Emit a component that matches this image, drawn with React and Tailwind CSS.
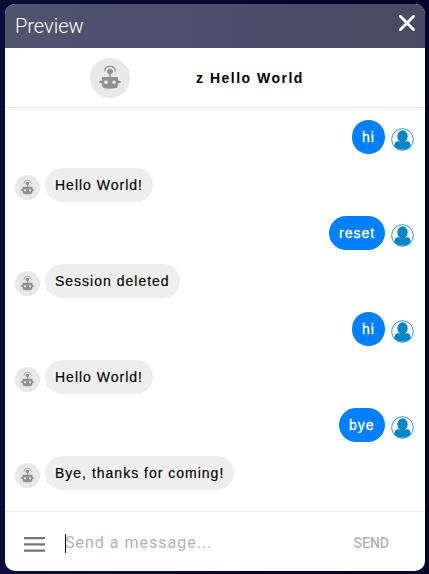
import React from "react";

const messages = [
  { from: "user", text: "hi", width: "w-[33px]" },
  { from: "bot", text: "Hello World!", width: "w-[108px]" },
  { from: "user", text: "reset", width: "w-[56px]" },
  { from: "bot", text: "Session deleted", width: "w-[135px]" },
  { from: "user", text: "hi", width: "w-[33px]" },
  { from: "bot", text: "Hello World!", width: "w-[108px]" },
  { from: "user", text: "bye", width: "w-[46px]" },
  { from: "bot", text: "Bye, thanks for coming!", width: "w-[189px]" },
];

function BotAvatar({ className }) {
  return (
    <svg viewBox="0 0 40 40" className={`shrink-0 ${className}`}>
      <circle cx="20" cy="20" r="20" fill="#e8e8e8" />
      <g fill="#919191">
        <circle cx="20" cy="13.6" r="2.8" />
        <rect x="19.3" y="14" width="1.5" height="6" />
        <path d="M13.2 18.9h13.6q1.3 0 1.3 1.3v2.5h1.6q1.2.3 1.2 1.3t-1.2 1.3h-1.6l-.4 3q-.3 1.7-2.1 1.9-5.6.9-11.2 0-1.8-.2-2.1-1.9l-.4-3h-1.6q-1.2-.3-1.2-1.3t1.2-1.3h1.6v-2.5q0-1.3 1.3-1.3Z" />
      </g>
      <path d="M14.6 13.2c.5-6.5 10.3-6.5 10.8 0" fill="none" stroke="#919191" strokeWidth="1.2" />
      <circle cx="16" cy="24.3" r="1.7" fill="#f4f4f4" />
      <circle cx="24" cy="24.3" r="1.7" fill="#f4f4f4" />
    </svg>
  );
}

function UserAvatar() {
  return (
    <svg viewBox="0 0 24 24" className="mb-[3px] ml-[6px] mr-[1px] h-[23px] w-[23px] shrink-0">
      <circle cx="12" cy="12" r="11.3" fill="#fff" stroke="#0786c3" strokeWidth=".9" />
      <path
        d="M6.6 13.9c-2 .5-3 2.300-3.200 4.900 2 2.500 4.900 4 8.600 4s6.600-1.500 8.600-4c-.2-2.600-1.200-4.400-3.200-4.900l-2.600-.5H9.200Z"
        fill="#0786c3"
      />
      <path d="M6.400 8.500c0 3.600 2.300 6.900 5.600 6.900s5.600-3.300 5.600-6.900" fill="none" stroke="#fff" strokeWidth=".8" />
      <ellipse cx="12" cy="8.700" rx="5.400" ry="6.400" fill="#0786c3" />
      <path d="M9.700 13.500h4.600v3H9.700Z" fill="#0786c3" />
    </svg>
  );
}

function Message({ from, text, width }) {
  const isUser = from === "user";
  return (
    <div className={`flex h-[34px] items-end ${isUser ? "justify-end" : "justify-start"}`}>
      {!isUser && <BotAvatar className="mb-[2px] mr-[5px] h-[25px] w-[25px]" />}
      <div
        className={`flex h-[34px] items-center whitespace-nowrap rounded-[17px] pl-[10px] text-[14px] tracking-[1px] ${width} ${
          isUser ? "bg-[#0080ff] text-white [-webkit-text-stroke:0.3px_#fff]" : "bg-[#eeeeee] text-black [-webkit-text-stroke:0.15px_#000]"
        }`}
      >
        {text}
      </div>
      {isUser && <UserAvatar />}
    </div>
  );
}

export default function App() {
  return (
    <div className="h-[574px] w-[429px] bg-linear-to-r from-[#080e38] to-[#03032a] pl-[5px] pt-[4px] font-['Liberation_Sans',Arial,sans-serif]">
      <div className="flex h-[567px] w-[420px] flex-col overflow-hidden rounded-[10px] bg-white">
        <header className="flex h-[44px] shrink-0 items-center justify-between bg-linear-to-r from-[#50546f] via-[#4b4f6b] to-[#4b4962] pl-[10px] pr-[10px]">
          <h1 className="font-[Roboto,sans-serif] text-[20px] font-light leading-[24px] text-white">Preview</h1>
          <svg viewBox="0 0 16 16" className="mb-[6px] h-4 w-4">
            <path d="M1.3 1.3 14.7 14.7M14.7 1.3 1.3 14.7" stroke="#fff" strokeWidth="2.8" strokeLinecap="round" />
          </svg>
        </header>
        <div className="flex h-[60px] shrink-0 items-center border-b border-[#ebebeb] pl-[85px]">
          <BotAvatar className="h-10 w-10" />
          <div className="ml-[66px] mt-[2px] whitespace-nowrap text-[14px] font-bold tracking-[1.5px] text-black">
            z Hello World
          </div>
        </div>
        <main className="flex flex-1 flex-col gap-[14px] px-[10px] pt-[12px]">
          {messages.map((message, index) => (
            <Message key={index} {...message} />
          ))}
        </main>
        <footer className="flex h-[60px] shrink-0 items-center border-t border-[#ebebeb] pl-[19px] pr-[36px] font-[Roboto,sans-serif]">
          <svg viewBox="0 0 21 15" className="mt-[5px] h-[15px] w-[21px]">
            <path d="M0 1.2h21M0 7.4h21M0 13.6h21" stroke="#757575" strokeWidth="2.3" />
          </svg>
          <div className="ml-[20px] mt-[4px] h-[19px] w-px bg-black" />
          <div className="-ml-px mt-[3px] flex-1 whitespace-nowrap text-[16px] tracking-[1px] text-[#b3b3b3]">
            Send a message...
          </div>
          <button className="mt-[3px] text-[14px] font-medium text-[#b3b3b3]">SEND</button>
        </footer>
      </div>
    </div>
  );
}
